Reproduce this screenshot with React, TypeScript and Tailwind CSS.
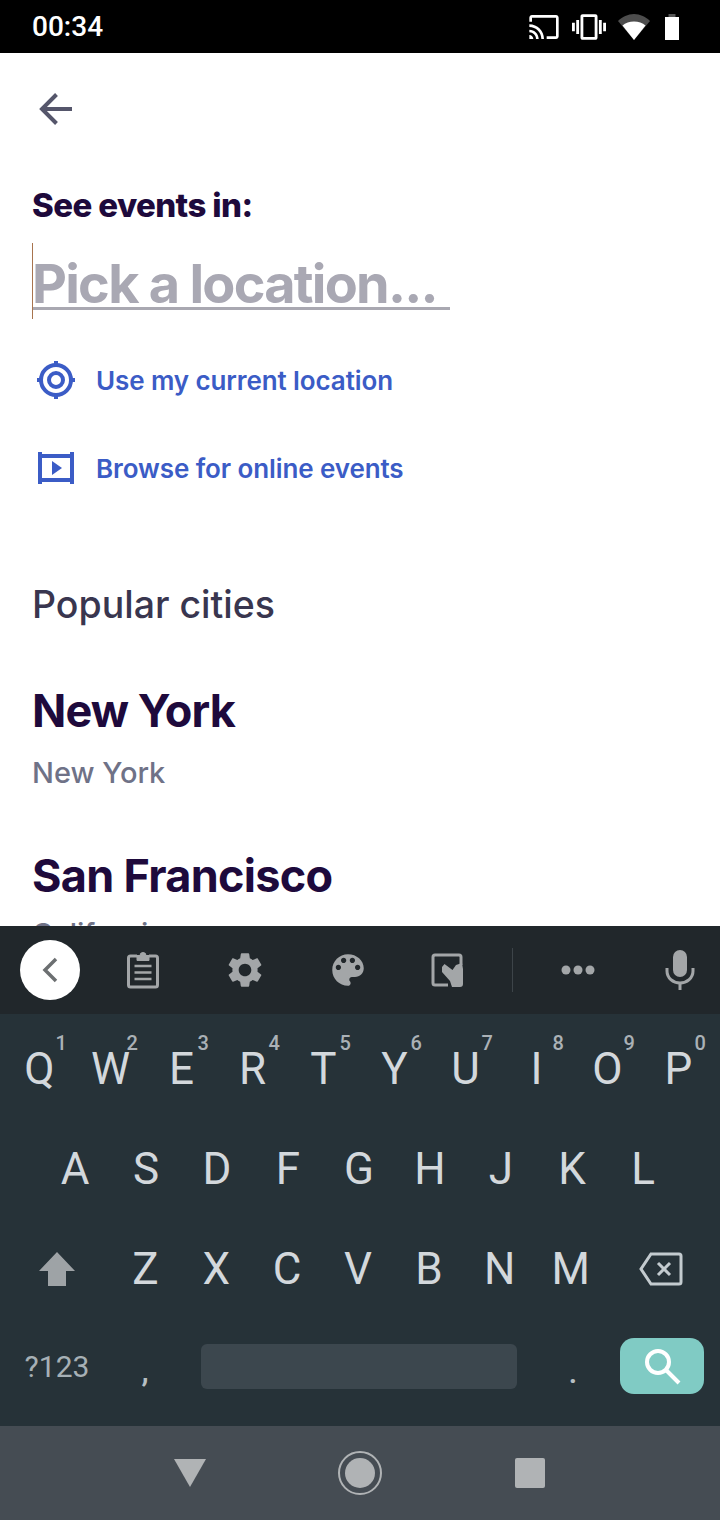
const ROW1: [string, string][] = [["Q","1"],["W","2"],["E","3"],["R","4"],["T","5"],["Y","6"],["U","7"],["I","8"],["O","9"],["P","0"]];
const ROW2 = ["A","S","D","F","G","H","J","K","L"];
const ROW3 = ["Z","X","C","V","B","N","M"];

function Key({ label, hint }: { label: string; hint?: string }) {
  return (
    <div className="relative flex h-full flex-1 items-center justify-center text-[44px] font-normal leading-none text-[#d3d8dc]">
      {label}
      {hint && <span className="absolute left-[50%] top-[9px] ml-[16px] text-[20px] font-medium leading-[28px] text-[#aab1b6]">{hint}</span>}
    </div>
  );
}

function Icon({ d, size, color, className }: { d: string; size: number; color: string; className?: string }) {
  return (
    <svg width={size} height={size} viewBox="0 0 24 24" fill={color} className={className}>
      <path d={d} />
    </svg>
  );
}

export default function App() {
  return (
    <div className="flex h-[1520px] w-[720px] flex-col overflow-hidden bg-white font-['Inter','Liberation_Sans',sans-serif]">
      {/* status bar */}
      <div className="flex h-[53px] shrink-0 items-center justify-between bg-black pl-[32px] pr-[40px] font-['Roboto',sans-serif] text-white">
        <span className="pt-[1px] text-[28px] font-medium leading-none">00:34</span>
        <div className="flex items-center">
          <Icon size={32} color="#fff" d="M21 3H3c-1.1 0-2 .9-2 2v3h2V5h18v14h-7v2h7c1.1 0 2-.9 2-2V5c0-1.1-.9-2-2-2zM1 18v3h3c0-1.66-1.34-3-3-3zm0-4v2c2.76 0 5 2.24 5 5h2c0-3.87-3.13-7-7-7zm0-4v2c4.97 0 9 4.03 9 9h2c0-6.08-4.93-11-11-11z" />
          <Icon size={34} color="#fff" className="ml-[12px]" d="M0 15h2V9H0v6zm3 2h2V7H3v10zm19-8v6h2V9h-2zm-3 8h2V7h-2v10zM16.5 3h-9C6.67 3 6 3.67 6 4.5v15c0 .83.67 1.5 1.5 1.5h9c.83 0 1.5-.67 1.5-1.5v-15c0-.83-.67-1.5-1.5-1.5zM16 19H8V5h8v14z" />
          <svg width="32" height="26" viewBox="0 0 32 26" className="ml-[12px]">
            <path d="M0 7C4 3 10 0 16 0s12 3 16 7L16 26z" fill="#4d4d4d" />
            <path d="M4.500 11.500C7.500 9 11.500 7.500 16 7.500s8.500 1.500 11.500 4L16 26z" fill="#fff" />
          </svg>
          <svg width="16" height="26" viewBox="0 0 16 26" className="ml-[14px]">
            <path d="M4.500 0h7v3H4.500z" fill="#555" />
            <path d="M1 3h14v23H1z" fill="#fff" />
          </svg>
        </div>
      </div>

      {/* page */}
      <div className="min-h-0 flex-1 overflow-hidden bg-white pl-[32px]">
        <svg width="36" height="36" viewBox="0 0 36 36" className="ml-[6px] mt-[38px]" fill="none" stroke="#55566b" strokeWidth="4">
          <path d="M34 18H4" />
          <path d="M18.500 3.500L4 18l14.500 14.500" />
        </svg>
        <div className="mt-[56px] text-[33px] font-extrabold leading-[44px] tracking-[-0.6px] text-[#1e0a3c]">See events in:</div>
        <div className="relative mt-[16px] h-[76px] w-[418px]">
          <div className="absolute left-0 top-0 h-[76px] w-[1px] bg-[#a8744e]" />
          <div className="ml-[1px] border-b-[3px] border-[#a9a8b1] pt-[17px] indent-[-1px] text-[54px] font-bold leading-[47px] tracking-[-1.750px] text-[#a9a8b3]">Pick a location...</div>
        </div>
        <div className="mt-[39px] flex h-[44px] items-center text-[26px] font-semibold tracking-[-0.1px] text-[#3b5cc6]">
          <svg width="40" height="40" viewBox="0 0 40 40" className="ml-[4px] mr-[20px] shrink-0" fill="none" stroke="#3b5cc6">
            <circle cx="20" cy="20" r="15" strokeWidth="4" />
            <circle cx="20" cy="20" r="7" strokeWidth="4" />
            <path d="M20 1v5M20 34v5M1 20h5M34 20h5" strokeWidth="4" />
          </svg>
          Use my current location
        </div>
        <div className="mt-[44px] flex h-[44px] items-center text-[26px] font-semibold tracking-[-0.1px] text-[#3b5cc6]">
          <svg width="36" height="32" viewBox="0 0 36 32" className="ml-[6px] mr-[22px] shrink-0" fill="#3b5cc6">
            <path d="M0 0h4v2h28V0h4v32h-4v-2H4v2H0zM4 6v20h28V6z" />
            <path d="M14 9l10 7-10 7z" />
          </svg>
          Browse for online events
        </div>
        <div className="mt-[91px] text-[37.500px] font-medium leading-[48px] text-[#39364f]">Popular cities</div>
        <div className="mt-[54px] text-[45px] font-bold leading-[56px] tracking-[-0.900px] text-[#1e0a3c]">New York</div>
        <div className="mt-[16px] text-[29px] font-medium leading-[36px] text-[#6f7287]">New York</div>
        <div className="mt-[57px] text-[45px] font-bold leading-[56px] tracking-[-0.700px] text-[#1e0a3c]">San Francisco</div>
        <div className="mt-[12px] text-[29px] font-medium leading-[36px] text-[#6f7287]">California</div>
      </div>

      {/* keyboard toolbar */}
      <div className="flex h-[88px] shrink-0 items-center bg-[#21272b]">
        <div className="ml-[20px] flex h-[60px] w-[60px] items-center justify-center rounded-full bg-white">
          <svg width="18" height="28" viewBox="0 0 18 28" fill="none" stroke="#6c6f71" strokeWidth="3.500"><path d="M15 3L4 14l11 11" /></svg>
        </div>
        <svg width="40" height="40" viewBox="0 0 40 40" className="ml-[43px]" fill="none" stroke="#a3a6a8">
          <path d="M14 6H7.500a2 2 0 0 0-2 2v27a2 2 0 0 0 2 2h25a2 2 0 0 0 2-2V8a2 2 0 0 0-2-2H26" strokeWidth="3" />
          <path d="M14 5.500h3a3 3 0 0 1 6 0h3v5H14z" fill="#a3a6a8" strokeWidth="1" />
          <path d="M11.500 16h17M11.500 22.500h17M11.500 29h17" strokeWidth="2.500" />
        </svg>
        <Icon size={42} color="#a3a6a8" className="ml-[61px]" d="M19.140 12.940c.04-.3.060-.61.060-.94 0-.32-.02-.64-.07-.94l2.030-1.580c.18-.14.230-.41.120-.61l-1.920-3.320c-.12-.22-.37-.29-.59-.22l-2.390.96c-.5-.38-1.030-.7-1.620-.94l-.36-2.540c-.04-.24-.24-.41-.48-.41h-3.840c-.24 0-.43.170-.47.41l-.36 2.540c-.59.24-1.130.570-1.620.94l-2.390-.96c-.22-.08-.47 0-.59.22L2.740 8.870c-.12.210-.08.470.12.610l2.030 1.580c-.05.3-.09.630-.09.940s.02.640.07.940l-2.030 1.580c-.18.140-.23.410-.12.610l1.920 3.320c.12.220.37.290.59.220l2.390-.96c.5.380 1.030.7 1.620.94l.36 2.540c.05.240.24.410.48.410h3.840c.24 0 .44-.17.470-.41l.36-2.540c.59-.24 1.130-.56 1.620-.94l2.390.96c.22.080.47 0 .59-.22l1.920-3.320c.12-.22.070-.47-.12-.61l-2.010-1.580zM12 15.600c-1.980 0-3.600-1.620-3.600-3.600s1.620-3.600 3.600-3.600 3.600 1.620 3.600 3.600-1.620 3.600-3.600 3.600z" />
        <Icon size={42} color="#a3a6a8" className="ml-[61px]" d="M12 3c-4.970 0-9 4.030-9 9s4.030 9 9 9c.83 0 1.500-.67 1.500-1.500 0-.39-.15-.74-.39-1.010-.23-.26-.38-.61-.38-.99 0-.83.67-1.500 1.500-1.500H16c2.760 0 5-2.240 5-5 0-4.420-4.030-8-9-8zm-5.500 9c-.83 0-1.500-.67-1.500-1.500S5.670 9 6.500 9 8 9.670 8 10.500 7.330 12 6.500 12zm3-4C8.670 8 8 7.330 8 6.500S8.670 5 9.500 5s1.500.67 1.500 1.500S10.330 8 9.500 8zm5 0c-.83 0-1.500-.67-1.500-1.500S13.670 5 14.500 5s1.500.67 1.500 1.500S15.330 8 14.500 8zm3 4c-.83 0-1.500-.67-1.500-1.500S16.670 9 17.500 9s1.500.67 1.500 1.500-.67 1.500-1.500 1.500z" />
        <svg width="34" height="34" viewBox="0 0 34 34" className="ml-[62px]" fill="none">
          <path d="M17 32H4a2 2 0 0 1-2-2V4a2 2 0 0 1 2-2h24a2 2 0 0 1 2 2v8" stroke="#a3a6a8" strokeWidth="3" />
          <path d="M11 14l2.500-3 8 6 3.500-5 6-2 1 6V31a3 3 0 0 1-3 3H21l-2-6-8-9z" fill="#a3a6a8" />
        </svg>
        <div className="ml-[47px] h-[44px] w-[1px] bg-[#3d4449]" />
        <svg width="36" height="12" viewBox="0 0 36 12" className="ml-[47px]" fill="#a3a6a8">
          <circle cx="6" cy="6" r="4.500" /><circle cx="18" cy="6" r="4.500" /><circle cx="30" cy="6" r="4.500" />
        </svg>
        <svg width="30" height="40" viewBox="0 0 30 40" className="ml-[69px]" fill="none">
          <rect x="8" y="0" width="14" height="27" rx="7" fill="#a3a6a8" />
          <path d="M2 18v3c0 7 6 12 13 12s13-5 13-12v-3" stroke="#a3a6a8" strokeWidth="3" />
          <path d="M15 33v7" stroke="#a3a6a8" strokeWidth="3" />
        </svg>
      </div>

      {/* keyboard */}
      <div className="flex h-[412px] shrink-0 flex-col bg-[#263238] pt-[4px] font-['Roboto',sans-serif]">
        <div className="flex h-[100px] pl-[4px] pr-[6px] pt-[2px]">
          {ROW1.map(([l, h]) => <Key key={l} label={l} hint={h} />)}
        </div>
        <div className="flex h-[100px] pl-[39.500px] pr-[41.500px] pt-[1px]">
          {ROW2.map((l) => <Key key={l} label={l} />)}
        </div>
        <div className="flex h-[100px] pt-[1px]">
          <div className="flex w-[114px] items-center justify-center">
            <svg width="38" height="34" viewBox="0 0 38 34" fill="#9ea3a6"><path d="M19 0L1 19h9v15h18V19h9z" /></svg>
          </div>
          <div className="-ml-[4px] flex flex-1">
            {ROW3.map((l) => <Key key={l} label={l} />)}
          </div>
          <div className="flex w-[114px] items-center justify-center pr-[4px]">
            <svg width="44" height="34" viewBox="0 0 44 34" fill="none" stroke="#c3cbcf" strokeWidth="3">
              <path d="M12 2h28a2 2 0 0 1 2 2v26a2 2 0 0 1-2 2H12L2 17z" />
              <path d="M19 11l12 12M31 11L19 23" />
            </svg>
          </div>
        </div>
        <div className="flex h-[96px] items-center">
          <div className="flex w-[114px] justify-center text-[30px] font-normal text-[#a6b0b5]">?123</div>
          <div className="flex w-[62px] justify-center pt-[10px] text-[32px] font-medium text-[#b6bfc3]">,</div>
          <div className="ml-[25px] h-[45px] w-[316px] rounded-[6px] bg-[#3c474e]" />
          <div className="ml-[25px] flex w-[62px] justify-center pt-[12px] text-[32px] font-medium text-[#b6bfc3]">.</div>
          <div className="ml-[16px] flex h-[56px] w-[84px] items-center justify-center rounded-[14px] bg-[#80cbc4]">
            <svg width="38" height="38" viewBox="0 0 38 38" fill="none" stroke="#fff" strokeWidth="4">
              <circle cx="15" cy="15" r="11" />
              <path d="M23 23l13 13" />
            </svg>
          </div>
        </div>
      </div>

      {/* nav bar */}
      <div className="relative flex h-[94px] shrink-0 items-center bg-[#454c53]">
        <svg width="34" height="30" viewBox="0 0 34 30" className="ml-[173px]" fill="#b0b3b5"><path d="M1 1h32L17 29z" /></svg>
        <div className="ml-[131px] flex h-[44px] w-[44px] items-center justify-center rounded-full border-2 border-[#b0b3b5]">
          <div className="h-[30px] w-[30px] rounded-full bg-[#b0b3b5]" />
        </div>
        <div className="ml-[133px] h-[30px] w-[30px] rounded-[2px] bg-[#b0b3b5]" />
      </div>
    </div>
  );
}
